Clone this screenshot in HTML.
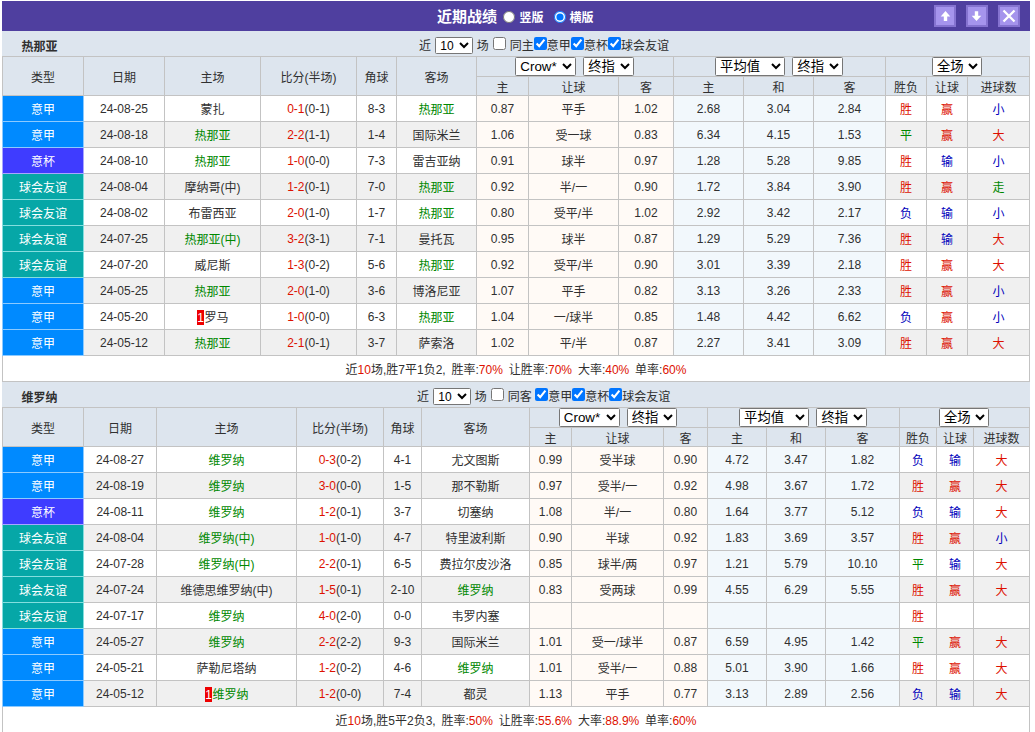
<!DOCTYPE html>
<html lang="zh-CN"><head><meta charset="utf-8"><title>近期战绩</title><style>
html,body{margin:0;padding:0;background:#fff;}
body{width:1035px;height:732px;overflow:hidden;position:relative;font-family:"Liberation Sans","Noto Sans CJK SC",sans-serif;font-size:12px;color:#303030;}
#w{position:absolute;left:2px;top:1px;width:1028px;}
.hd{height:30px;background:#4f3f9f;position:relative;color:#fff;}
.hd .ti{position:absolute;left:435px;top:6px;font-size:15px;font-weight:bold;line-height:20px;white-space:nowrap;}
.hd .op{position:absolute;left:501px;top:7px;font-size:12px;font-weight:bold;line-height:20px;white-space:nowrap;}
.hd input{margin:0 5px 0 -0.5px;vertical-align:-1px;width:12px;height:12px;}
.hd input.r2{margin-left:10px;margin-right:4px}
.btn{position:absolute;top:4px;width:18px;height:18px;border:2px solid #8573d0;background:#a594ec;}
.btn svg{position:absolute;left:0;top:0;}
.tm{height:25px;background:#dde5ee;position:relative;}
.tm .nm{position:absolute;left:19.5px;top:8px;line-height:16px;font-size:12px;color:#303030;}
.tm .flt{position:absolute;left:417px;top:5px;line-height:20px;white-space:nowrap;font-size:12px;}
.tm input{margin:0;vertical-align:0px;width:13px;height:13px;}
.tm input.c1{margin-left:1px;margin-right:0.5px}
select{font-family:"Liberation Sans","Noto Sans CJK SC",sans-serif;font-size:13.33px;height:18px;padding:0;margin:0;border:1px solid #767676;border-radius:1.5px;background-color:#fff;color:#000;vertical-align:middle;}
.s10{width:38px;height:17px;margin:0 0 0 1px;position:relative;top:-1px;font-size:12px}
.h1 select{height:19px;vertical-align:top}.h1 th.sl{line-height:19px;vertical-align:top}
.sc{width:61px;margin-right:3.5px}.sz{width:50.5px;margin-right:1px}.sp{width:70px;margin-right:4px}.sq{width:50px;margin-right:1px}
table.t{border-collapse:collapse;table-layout:fixed;width:1028px;margin-left:0;}
.t th,.t td{border:1px solid #c3c3c3;padding:0;text-align:center;font-weight:normal;white-space:nowrap;overflow:hidden;}
.t th{background:#dde5ee;}
.h1{height:20px}.h2{height:19px}
.t tr.o,.t tr.e{height:26px;}
.t tr.o td{background:#fff}
.t tr.e td{background:#f0f0f0}
.t tr td.p{background:#fffaf6}
.t tr td.q{background:#f2f8fc}
.t tr td.ta{background:#008aff;color:#fff;border-color:#8ccaff}
.t tr td.tb{background:#3f3cff;color:#fff;border-color:#a9a6ff}
.t tr td.tc{background:#06a7a7;color:#fff;border-color:#84dede}
.r{color:#d10}.g{color:#080}.b{color:#00b}
.rk{background:#e00;color:#fff;padding:1px 0.6px 0;}
.sm{height:26px}
.sm td{background:#fff;word-spacing:2.5px}
.gap{height:3px;background:#fff}
</style></head><body><div id="w">
<div class="hd"><span class="ti">近期战绩</span><span class="op"><input type="radio" name="v">竖版<input class="r2" type="radio" name="v" checked>横版</span><span class="btn" style="left:932px"><svg width="18" height="18" viewBox="0 0 18 18"><path d="M9.5 4.1 L14.3 9.6 H11.2 V13.9 H7.8 V9.6 H4.7 Z" fill="#fff"/></svg></span><span class="btn" style="left:964px"><svg width="18" height="18" viewBox="0 0 18 18"><path d="M8.5 14 L13.3 8.8 H10.2 V4.2 H6.8 V8.8 H3.7 Z" fill="#fff"/></svg></span><span class="btn" style="left:996px"><svg width="18" height="18" viewBox="0 0 18 18"><path d="M3.5 3.5 L14.5 14.5 M14.5 3.5 L3.5 14.5" stroke="#fff" stroke-width="2.3" fill="none"/></svg></span></div>
<div class="tm"><b class="nm">热那亚</b><div class="flt">近 <select class="s10"><option>10</option></select> 场 <input class="c1" type="checkbox"> 同主<input type="checkbox" checked>意甲<input type="checkbox" checked>意杯<input type="checkbox" checked>球会友谊</div></div>
<table class="t"><colgroup><col style="width:81px"><col style="width:81px"><col style="width:96px"><col style="width:96px"><col style="width:40px"><col style="width:80px"><col style="width:52px"><col style="width:90px"><col style="width:55px"><col style="width:70px"><col style="width:70px"><col style="width:72px"><col style="width:41px"><col style="width:41px"><col style="width:62px"></colgroup>
<tr class="h1"><th rowspan="2">类型</th><th rowspan="2">日期</th><th rowspan="2">主场</th><th rowspan="2">比分(半场)</th><th rowspan="2">角球</th><th rowspan="2">客场</th><th class="sl" colspan="3"><select class="sc"><option>Crow*</option></select> <select class="sz"><option>终指</option></select></th><th class="sl" colspan="3"><select class="sp"><option>平均值</option></select> <select class="sz"><option>终指</option></select></th><th class="sl" colspan="3"><select class="sq"><option>全场</option></select></th></tr>
<tr class="h2"><th>主</th><th>让球</th><th>客</th><th>主</th><th>和</th><th>客</th><th>胜负</th><th>让球</th><th>进球数</th></tr>
<tr class="o"><td class="ta">意甲</td><td>24-08-25</td><td><span>蒙扎</span></td><td><span class="r">0-1</span>(0-1)</td><td>8-3</td><td><span class="g">热那亚</span></td><td class="p">0.87</td><td class="p">平手</td><td class="p">1.02</td><td class="q">2.68</td><td class="q">3.04</td><td class="q">2.84</td><td class="r">胜</td><td class="r">赢</td><td class="b">小</td></tr>
<tr class="e"><td class="ta">意甲</td><td>24-08-18</td><td><span class="g">热那亚</span></td><td><span class="r">2-2</span>(1-1)</td><td>1-4</td><td><span>国际米兰</span></td><td class="p">1.06</td><td class="p">受一球</td><td class="p">0.83</td><td class="q">6.34</td><td class="q">4.15</td><td class="q">1.53</td><td class="g">平</td><td class="r">赢</td><td class="r">大</td></tr>
<tr class="o"><td class="tb">意杯</td><td>24-08-10</td><td><span class="g">热那亚</span></td><td><span class="r">1-0</span>(0-0)</td><td>7-3</td><td><span>雷吉亚纳</span></td><td class="p">0.91</td><td class="p">球半</td><td class="p">0.97</td><td class="q">1.28</td><td class="q">5.28</td><td class="q">9.85</td><td class="r">胜</td><td class="b">输</td><td class="b">小</td></tr>
<tr class="e"><td class="tc">球会友谊</td><td>24-08-04</td><td><span>摩纳哥(中)</span></td><td><span class="r">1-2</span>(0-1)</td><td>7-0</td><td><span class="g">热那亚</span></td><td class="p">0.92</td><td class="p">半/一</td><td class="p">0.90</td><td class="q">1.72</td><td class="q">3.84</td><td class="q">3.90</td><td class="r">胜</td><td class="r">赢</td><td class="g">走</td></tr>
<tr class="o"><td class="tc">球会友谊</td><td>24-08-02</td><td><span>布雷西亚</span></td><td><span class="r">2-0</span>(1-0)</td><td>1-7</td><td><span class="g">热那亚</span></td><td class="p">0.80</td><td class="p">受平/半</td><td class="p">1.02</td><td class="q">2.92</td><td class="q">3.42</td><td class="q">2.17</td><td class="b">负</td><td class="b">输</td><td class="b">小</td></tr>
<tr class="e"><td class="tc">球会友谊</td><td>24-07-25</td><td><span class="g">热那亚(中)</span></td><td><span class="r">3-2</span>(3-1)</td><td>7-1</td><td><span>曼托瓦</span></td><td class="p">0.95</td><td class="p">球半</td><td class="p">0.87</td><td class="q">1.29</td><td class="q">5.29</td><td class="q">7.36</td><td class="r">胜</td><td class="b">输</td><td class="r">大</td></tr>
<tr class="o"><td class="tc">球会友谊</td><td>24-07-20</td><td><span>威尼斯</span></td><td><span class="r">1-3</span>(0-2)</td><td>5-6</td><td><span class="g">热那亚</span></td><td class="p">0.92</td><td class="p">受平/半</td><td class="p">0.90</td><td class="q">3.01</td><td class="q">3.39</td><td class="q">2.18</td><td class="r">胜</td><td class="r">赢</td><td class="r">大</td></tr>
<tr class="e"><td class="ta">意甲</td><td>24-05-25</td><td><span class="g">热那亚</span></td><td><span class="r">2-0</span>(1-0)</td><td>3-6</td><td><span>博洛尼亚</span></td><td class="p">1.07</td><td class="p">平手</td><td class="p">0.82</td><td class="q">3.13</td><td class="q">3.26</td><td class="q">2.33</td><td class="r">胜</td><td class="r">赢</td><td class="b">小</td></tr>
<tr class="o"><td class="ta">意甲</td><td>24-05-20</td><td><span class="rk">1</span><span>罗马</span></td><td><span class="r">1-0</span>(0-0)</td><td>6-3</td><td><span class="g">热那亚</span></td><td class="p">1.04</td><td class="p">一/球半</td><td class="p">0.85</td><td class="q">1.48</td><td class="q">4.42</td><td class="q">6.62</td><td class="b">负</td><td class="r">赢</td><td class="b">小</td></tr>
<tr class="e"><td class="ta">意甲</td><td>24-05-12</td><td><span class="g">热那亚</span></td><td><span class="r">2-1</span>(0-1)</td><td>3-7</td><td><span>萨索洛</span></td><td class="p">1.02</td><td class="p">平/半</td><td class="p">0.87</td><td class="q">2.27</td><td class="q">3.41</td><td class="q">3.09</td><td class="r">胜</td><td class="r">赢</td><td class="r">大</td></tr>
<tr class="sm"><td colspan="15">近<span class="r">10</span>场,胜7平1负2, 胜率:<span class="r">70%</span> 让胜率:<span class="r">70%</span> 大率:<span class="r">40%</span> 单率:<span class="r">60%</span></td></tr>
</table>
<div class="tm"><b class="nm">维罗纳</b><div class="flt" style="left:415px">近 <select class="s10"><option>10</option></select> 场 <input class="c1" type="checkbox"> 同客 <input type="checkbox" checked>意甲<input type="checkbox" checked>意杯<input type="checkbox" checked>球会友谊</div></div>
<table class="t"><colgroup><col style="width:81px"><col style="width:73px"><col style="width:140px"><col style="width:87px"><col style="width:38px"><col style="width:108px"><col style="width:42px"><col style="width:92px"><col style="width:44px"><col style="width:59px"><col style="width:59px"><col style="width:74px"><col style="width:37px"><col style="width:37px"><col style="width:56px"></colgroup>
<tr class="h1"><th rowspan="2">类型</th><th rowspan="2">日期</th><th rowspan="2">主场</th><th rowspan="2">比分(半场)</th><th rowspan="2">角球</th><th rowspan="2">客场</th><th class="sl" colspan="3"><select class="sc"><option>Crow*</option></select> <select class="sz"><option>终指</option></select></th><th class="sl" colspan="3"><select class="sp"><option>平均值</option></select> <select class="sz"><option>终指</option></select></th><th class="sl" colspan="3"><select class="sq"><option>全场</option></select></th></tr>
<tr class="h2"><th>主</th><th>让球</th><th>客</th><th>主</th><th>和</th><th>客</th><th>胜负</th><th>让球</th><th>进球数</th></tr>
<tr class="o"><td class="ta">意甲</td><td>24-08-27</td><td><span class="g">维罗纳</span></td><td><span class="r">0-3</span>(0-2)</td><td>4-1</td><td><span>尤文图斯</span></td><td class="p">0.99</td><td class="p">受半球</td><td class="p">0.90</td><td class="q">4.72</td><td class="q">3.47</td><td class="q">1.82</td><td class="b">负</td><td class="b">输</td><td class="r">大</td></tr>
<tr class="e"><td class="ta">意甲</td><td>24-08-19</td><td><span class="g">维罗纳</span></td><td><span class="r">3-0</span>(0-0)</td><td>1-5</td><td><span>那不勒斯</span></td><td class="p">0.97</td><td class="p">受半/一</td><td class="p">0.92</td><td class="q">4.98</td><td class="q">3.67</td><td class="q">1.72</td><td class="r">胜</td><td class="r">赢</td><td class="r">大</td></tr>
<tr class="o"><td class="tb">意杯</td><td>24-08-11</td><td><span class="g">维罗纳</span></td><td><span class="r">1-2</span>(0-1)</td><td>3-7</td><td><span>切塞纳</span></td><td class="p">1.08</td><td class="p">半/一</td><td class="p">0.80</td><td class="q">1.64</td><td class="q">3.77</td><td class="q">5.12</td><td class="b">负</td><td class="b">输</td><td class="r">大</td></tr>
<tr class="e"><td class="tc">球会友谊</td><td>24-08-04</td><td><span class="g">维罗纳(中)</span></td><td><span class="r">1-0</span>(1-0)</td><td>4-7</td><td><span>特里波利斯</span></td><td class="p">0.90</td><td class="p">半球</td><td class="p">0.92</td><td class="q">1.83</td><td class="q">3.69</td><td class="q">3.57</td><td class="r">胜</td><td class="r">赢</td><td class="b">小</td></tr>
<tr class="o"><td class="tc">球会友谊</td><td>24-07-28</td><td><span class="g">维罗纳(中)</span></td><td><span class="r">2-2</span>(0-1)</td><td>6-5</td><td><span>费拉尔皮沙洛</span></td><td class="p">0.85</td><td class="p">球半/两</td><td class="p">0.97</td><td class="q">1.21</td><td class="q">5.79</td><td class="q">10.10</td><td class="g">平</td><td class="b">输</td><td class="r">大</td></tr>
<tr class="e"><td class="tc">球会友谊</td><td>24-07-24</td><td><span>维德思维罗纳(中)</span></td><td><span class="r">1-5</span>(0-1)</td><td>2-10</td><td><span class="g">维罗纳</span></td><td class="p">0.83</td><td class="p">受两球</td><td class="p">0.99</td><td class="q">4.55</td><td class="q">6.29</td><td class="q">5.55</td><td class="r">胜</td><td class="r">赢</td><td class="r">大</td></tr>
<tr class="o"><td class="tc">球会友谊</td><td>24-07-17</td><td><span class="g">维罗纳</span></td><td><span class="r">4-0</span>(2-0)</td><td>0-0</td><td><span>韦罗内塞</span></td><td class="p"></td><td class="p"></td><td class="p"></td><td class="q"></td><td class="q"></td><td class="q"></td><td class="r">胜</td><td class=""></td><td class=""></td></tr>
<tr class="e"><td class="ta">意甲</td><td>24-05-27</td><td><span class="g">维罗纳</span></td><td><span class="r">2-2</span>(2-2)</td><td>9-3</td><td><span>国际米兰</span></td><td class="p">1.01</td><td class="p">受一/球半</td><td class="p">0.87</td><td class="q">6.59</td><td class="q">4.95</td><td class="q">1.42</td><td class="g">平</td><td class="r">赢</td><td class="r">大</td></tr>
<tr class="o"><td class="ta">意甲</td><td>24-05-21</td><td><span>萨勒尼塔纳</span></td><td><span class="r">1-2</span>(0-2)</td><td>4-6</td><td><span class="g">维罗纳</span></td><td class="p">1.01</td><td class="p">受半/一</td><td class="p">0.88</td><td class="q">5.01</td><td class="q">3.90</td><td class="q">1.66</td><td class="r">胜</td><td class="r">赢</td><td class="r">大</td></tr>
<tr class="e"><td class="ta">意甲</td><td>24-05-12</td><td><span class="rk">1</span><span class="g">维罗纳</span></td><td><span class="r">1-2</span>(0-0)</td><td>7-4</td><td><span>都灵</span></td><td class="p">1.13</td><td class="p">平手</td><td class="p">0.77</td><td class="q">3.13</td><td class="q">2.89</td><td class="q">2.56</td><td class="b">负</td><td class="b">输</td><td class="r">大</td></tr>
<tr class="sm"><td colspan="15">近<span class="r">10</span>场,胜5平2负3, 胜率:<span class="r">50%</span> 让胜率:<span class="r">55.6%</span> 大率:<span class="r">88.9%</span> 单率:<span class="r">60%</span></td></tr>
</table>
</div></body></html>
